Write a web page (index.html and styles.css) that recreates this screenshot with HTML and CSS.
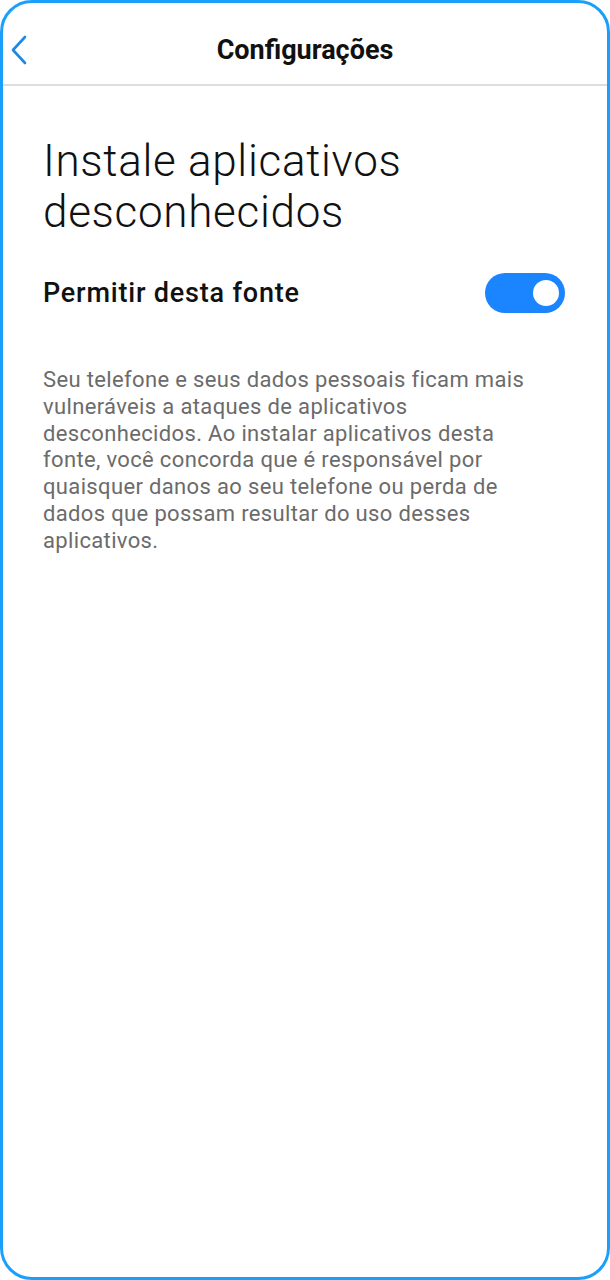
FILE: index.html
```html
<!DOCTYPE html>
<html lang="pt">
<head>
<meta charset="utf-8">
<title>Configurações</title>
<link rel="stylesheet" href="styles.css">
</head>
<body>
<div class="phone">
  <header class="topbar">
    <button class="back" aria-label="Voltar">
      <svg width="20" height="30" viewBox="0 0 20 30"><path d="M16 2 L4 15 L16 28" fill="none" stroke="#1e88e5" stroke-width="2.6" stroke-linecap="round" stroke-linejoin="round"/></svg>
    </button>
    <h1 class="title">Configurações</h1>
  </header>
  <main class="content">
    <h2 class="heading">Instale aplicativos desconhecidos</h2>
    <div class="row">
      <span class="row-label">Permitir desta fonte</span>
      <span class="toggle"><span class="knob"></span></span>
    </div>
    <p class="desc">Seu telefone e seus dados pessoais ficam mais vulneráveis a ataques de aplicativos desconhecidos. Ao instalar aplicativos desta fonte, você concorda que é responsável por quaisquer danos ao seu telefone ou perda de dados que possam resultar do uso desses aplicativos.</p>
  </main>
</div>
</body>
</html>
```
FILE: styles.css
```css
* { box-sizing: border-box; }
html, body { margin: 0; padding: 0; background: #fff; }
body { font-family: Roboto, "Noto Sans", sans-serif; }
.phone {
  width: 610px;
  height: 1280px;
  border: 3px solid #1aa0fa;
  border-radius: 32px;
  background: #fff;
  overflow: hidden;
}
.topbar {
  position: relative;
  height: 83px;
  border-bottom: 2px solid #dedede;
  display: flex;
  align-items: center;
  justify-content: center;
}
.back {
  position: absolute;
  left: 6px;
  top: 32px;
  background: none;
  border: 0;
  padding: 0;
  display: flex;
}
.title {
  margin: 0;
  padding-top: 12px;
  font-size: 27px;
  font-weight: 700;
  color: #111;
}
.content {
  padding: 50px 42px 0 40px;
}
.heading {
  margin: 0;
  font-size: 44px;
  font-weight: 300;
  letter-spacing: 0.7px;
  line-height: 51px;
  color: #111;
  width: 440px;
}
.row {
  margin-top: 35px;
  display: flex;
  align-items: center;
  justify-content: space-between;
}
.row-label {
  font-size: 27px;
  font-weight: 500;
  letter-spacing: 0.8px;
  color: #111;
}
.toggle {
  width: 80px;
  height: 40px;
  border-radius: 20px;
  background: #1a85ff;
  display: flex;
  align-items: center;
  justify-content: flex-end;
  padding-right: 6px;
}
.knob {
  width: 26px;
  height: 26px;
  border-radius: 50%;
  background: #fff;
}
.desc {
  margin: 54px 0 0;
  font-size: 22px;
  letter-spacing: 0.35px;
  line-height: 26.8px;
  color: #6b6b6b;
  width: 500px;
}
```
